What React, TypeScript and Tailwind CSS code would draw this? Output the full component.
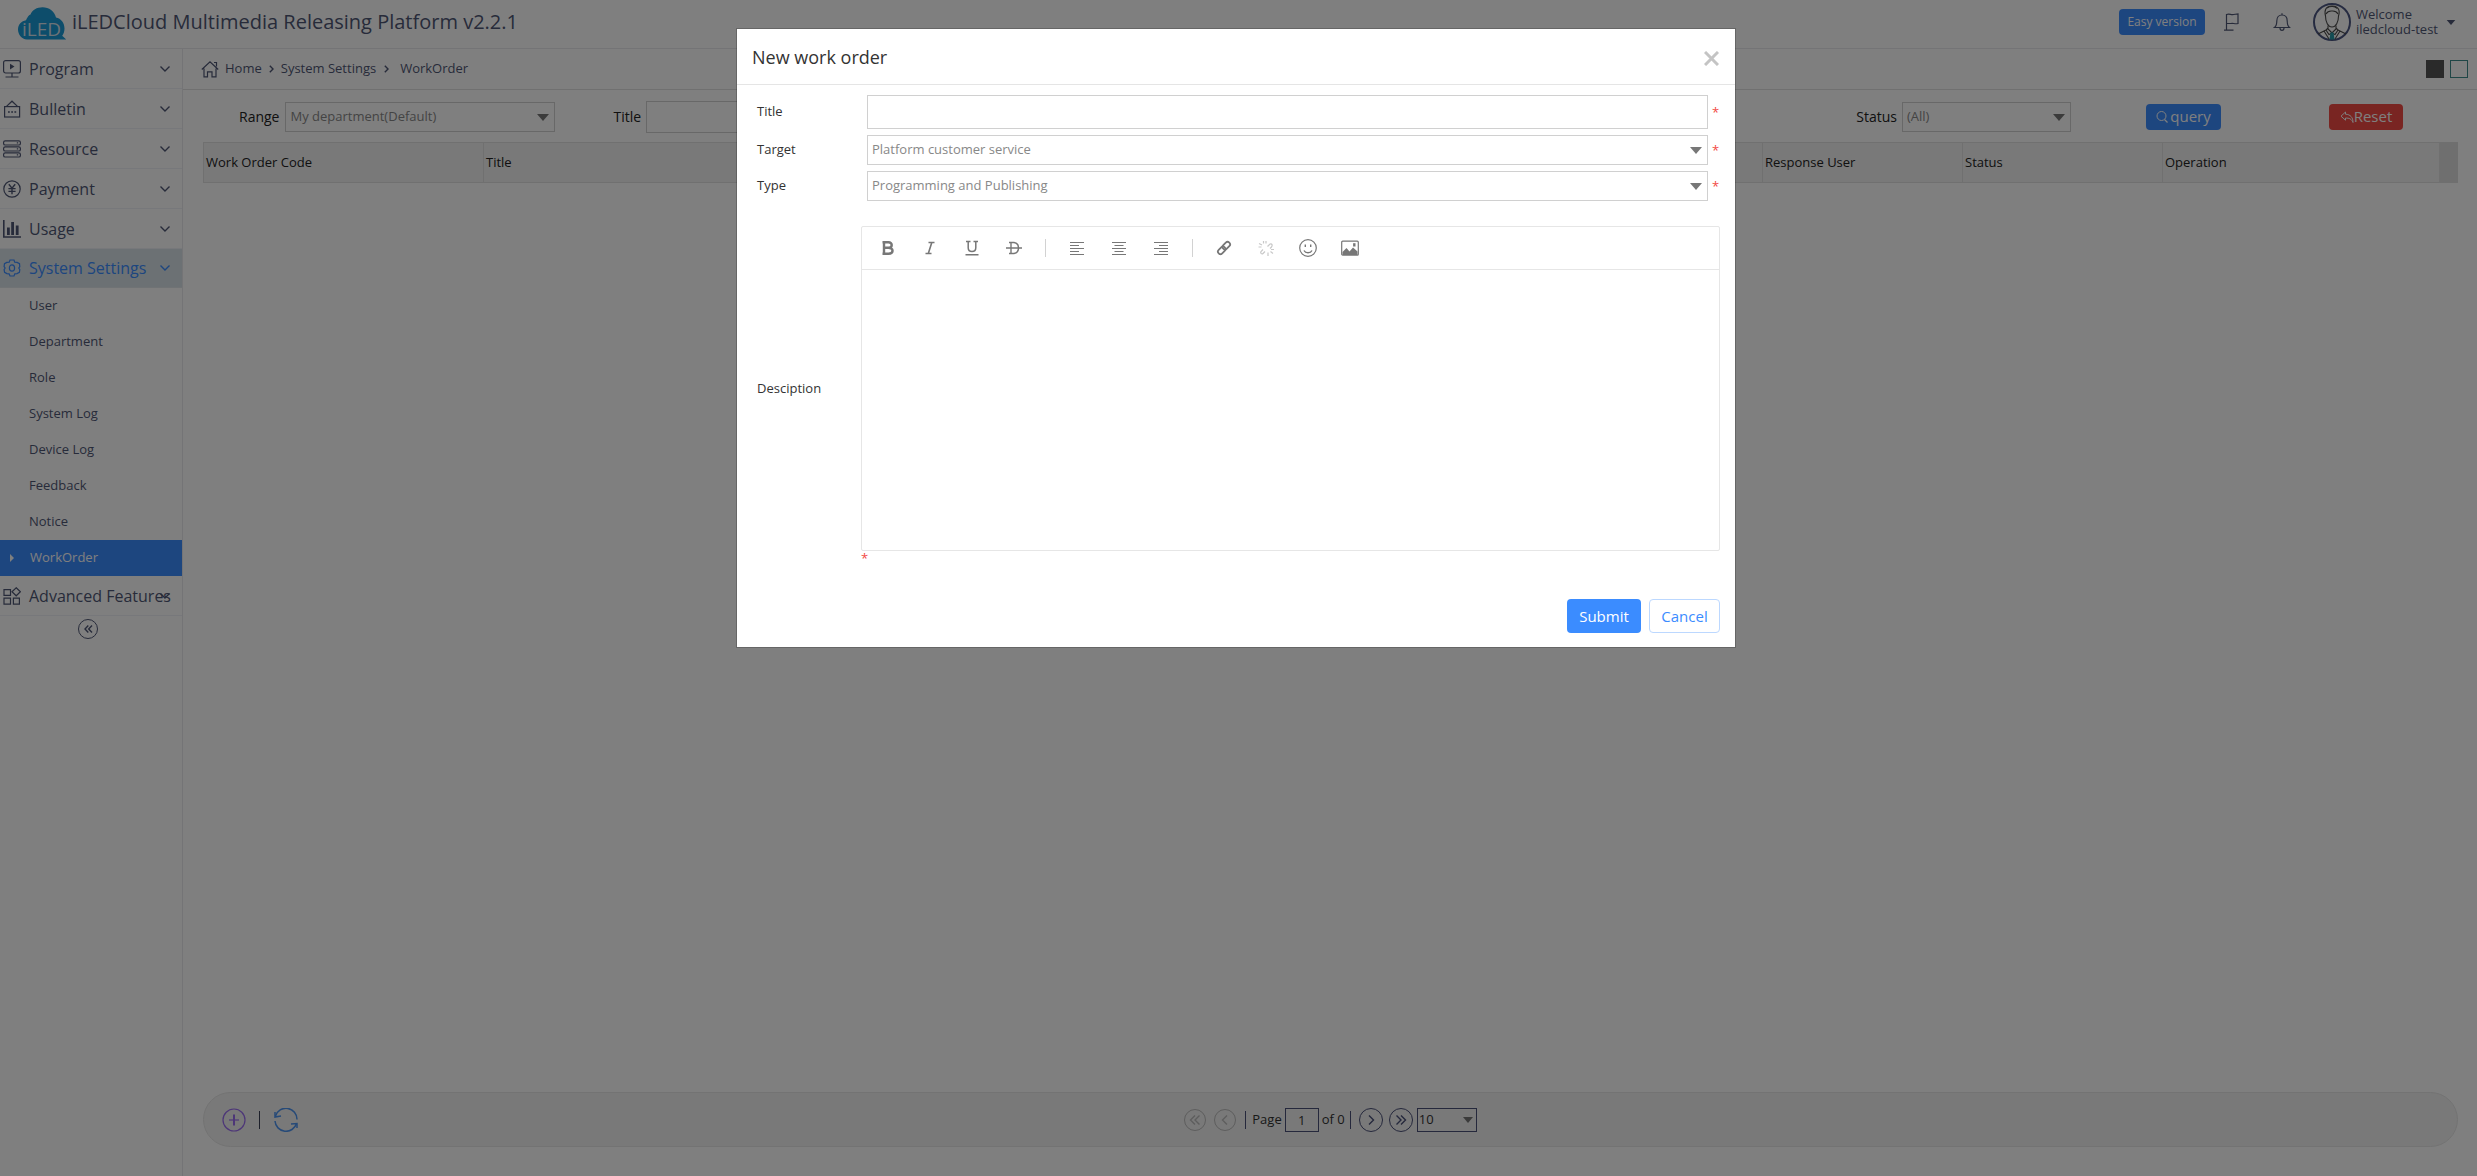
import React from "react";

type IconProps = { className?: string };

const Svg = ({ children, className, box = "0 0 18 18" }: { children: React.ReactNode; className?: string; box?: string }) => (
  <svg viewBox={box} fill="none" stroke="currentColor" strokeWidth="1.2" className={className ?? "h-[18px] w-[18px]"} aria-hidden="true">
    {children}
  </svg>
);

const ProgramIcon = () => (
  <Svg>
    <rect x="0.6" y="0.6" width="16.8" height="12.4" rx="2" />
    <path d="M7 3.8v5.6L11.5 6.6z" fill="currentColor" stroke="none" />
    <path d="M9 13v3.6M2.5 17h13" />
  </Svg>
);
const BulletinIcon = () => (
  <Svg>
    <rect x="1.6" y="6.6" width="15" height="10.4" />
    <path d="M3.5 6.4L9 1.2l5.5 5.2" />
    <path d="M5 12h1.8M8.2 12H10M11.4 12h1.8" strokeWidth="1.4" />
  </Svg>
);
const ResourceIcon = () => (
  <Svg>
    <rect x="0.6" y="0.8" width="16.8" height="4.2" rx="1.6" />
    <rect x="0.6" y="6.8" width="16.8" height="4.2" rx="1.6" />
    <rect x="0.6" y="12.8" width="16.8" height="4.2" rx="1.6" />
    <path d="M13.8 2.9h1.4M13.8 8.9h1.4M13.8 14.9h1.4" />
  </Svg>
);
const PaymentIcon = () => (
  <Svg>
    <circle cx="9" cy="9" r="8.2" />
    <path d="M5.8 4.2L9 8.2l3.2-4M9 8.2v6M5.4 8.6h7.2M5.4 11.4h7.2" strokeWidth="1.4" />
  </Svg>
);
const UsageIcon = () => (
  <Svg>
    <path d="M0.8 0v17H18" strokeWidth="1.6" />
    <path d="M5.4 7.5V15M9.6 2v13M14.2 5.5V15" strokeWidth="2.8" />
  </Svg>
);
const SettingsIcon = () => (
  <Svg>
    <path d="M7 1h4l.7 2.2 2.4.2 2.4 1.3.3 3-1 1.3 1 1.6-.4 2.8-2.4 1.2-2.2.2L11 17H7l-.9-2.2-2.2-.2-2.3-1.2-.5-2.8 1-1.6-1-1.5.4-2.8 2.3-1.3 2.4-.2z" />
    <ellipse cx="9" cy="9" rx="2.6" ry="3.2" />
  </Svg>
);
const AdvancedIcon = () => (
  <Svg>
    <path d="M1 2.6h6.500v5.800H1zM1 11.200h6.500v6H1zM10.400 11.200h6v6h-6z" />
    <path d="M13.200 .8l4.200 4-4.200 4-4.200-4z" />
  </Svg>
);

const Chevron = () => (
  <Svg box="0 0 10 6" className="h-[6px] w-[10px]">
    <path d="M0.5 0.5L5 5l4.5-4.5" strokeWidth="1.4" />
  </Svg>
);

const Caret = ({ className }: IconProps) => (
  <svg viewBox="0 0 12 7" className={className} aria-hidden="true">
    <path d="M0 0h12L6 7z" fill="currentColor" />
  </svg>
);

const Logo = () => (
  <svg viewBox="0 0 50 34" className="h-[34px] w-[50px]" role="img" aria-label="iLED">
    <path
      d="M10 32.5C4.5 32 1 27.5 1 22.5c0-5 3.500-8.500 8-9.200C11 9 12 8 13.500 7.500 15 3 20 .2 25.500.2c6.500 0 12 4 13.500 10.300 5 1 8.500 5.500 8.500 11 0 3-.8 5.200-2.300 7.200l4 3.800z"
      fill="#1a9ad6"
    />
    <text x="5" y="29" fill="#d9e4ee" fontFamily="Open Sans, sans-serif" fontSize="19">
      iLED
    </text>
  </svg>
);

const Avatar = () => (
  <svg viewBox="0 0 38 38" className="h-[38px] w-[38px]" role="img" aria-label="User avatar">
    <circle cx="19" cy="19" r="18" fill="none" stroke="#4c5782" strokeWidth="2" />
    <g fill="none" stroke="#4a4a4a" strokeWidth="1.1">
      <path d="M12.500 13C11 7 13 3 19 3s8.500 4 6.500 10c0 6-2.500 11-6.500 11s-6.500-5-6.500-11z" />
      <path d="M13 11c2-3.500 4-3 6-3s4-.5 6 3M14 5c3-2 8-2 10 .5" />
      <path d="M15 22.500v3.500l4 4 4-4v-3.500M15 25l-2 2 3 4.500 3-1.500 3 1.500 3-4.500-2-2M13 27l-8 4M25 27l8 4M11 28l5 8M27 28l-5 8" />
    </g>
    <path d="M17.500 29.500h3l1 7h-5z" fill="#279aa8" />
  </svg>
);

const menu = [
  { label: "Program", Icon: ProgramIcon },
  { label: "Bulletin", Icon: BulletinIcon },
  { label: "Resource", Icon: ResourceIcon },
  { label: "Payment", Icon: PaymentIcon },
  { label: "Usage", Icon: UsageIcon },
];
const subMenu = ["User", "Department", "Role", "System Log", "Device Log", "Feedback", "Notice"];

function MenuButton({ label, Icon, active }: { label: string; Icon: React.FC; active?: boolean }) {
  return (
    <button
      type="button"
      className={
        "relative flex w-full items-center border-b pl-[3px] text-left text-base " +
        (active ? "h-[39px] border-[#e0e6ea] bg-[#d8e2e8] font-medium text-[#3b8cff]" : "h-10 border-[#eef0f6] text-[#4f5775]")
      }
    >
      <Icon />
      <span className="ml-2 whitespace-nowrap">{label}</span>
      <span className="absolute right-3">
        <Chevron />
      </span>
    </button>
  );
}

function Sidebar() {
  return (
    <nav className="w-[183px] shrink-0 border-r border-[#e8e8ec] text-[#4f5775]">
      {menu.map((m) => (
        <MenuButton key={m.label} {...m} />
      ))}
      <MenuButton label="System Settings" Icon={SettingsIcon} active />
      <ul className="text-[13px]">
        {subMenu.map((s) => (
          <li key={s}>
            <a href="#" className="flex h-9 items-center pl-[29px]">
              {s}
            </a>
          </li>
        ))}
        <li>
          <a href="#" aria-current="page" className="flex h-9 items-center bg-[#3b8cff] pl-[10px] text-white">
            <svg viewBox="0 0 4 8" className="h-2 w-1" aria-hidden="true">
              <path d="M0 0l4 4-4 4z" fill="currentColor" />
            </svg>
            <span className="ml-4">WorkOrder</span>
          </a>
        </li>
      </ul>
      <MenuButton label="Advanced Features" Icon={AdvancedIcon} />
      <div className="flex justify-center pt-[3px] pr-1.5">
        <button type="button" aria-label="Collapse menu" className="flex h-5 w-5 items-center justify-center rounded-full border border-current">
          <Svg box="0 0 9 8" className="h-2 w-[9px]">
            <path d="M4.300.5L1 4l3.300 3.500M8 .5L4.700 4 8 7.500" strokeWidth="1.4" />
          </Svg>
        </button>
      </div>
    </nav>
  );
}

function Header() {
  return (
    <header className="flex h-[49px] items-center border-b border-[#e8e8ec] pr-[21px] pl-[17px] text-[#4f5775]">
      <Logo />
      <h1 className="mb-[5px] ml-[5px] text-xl">iLEDCloud Multimedia Releasing Platform v2.2.1</h1>
      <div className="mb-1 ml-auto flex items-center">
        <button type="button" className="h-[26px] w-[86px] rounded bg-[#3b8cff] text-xs text-white">
          Easy version
        </button>
        <button type="button" aria-label="Flag" className="ml-[18px]">
          <Svg>
            <path d="M3.500 17V1.500c3-1.200 4.500.8 7 0l4.500-.5v9.500c-3 .8-5-.6-7 0H3.500M1 17.200h9.500" />
          </Svg>
        </button>
        <button type="button" aria-label="Notifications" className="ml-8">
          <Svg>
            <path d="M1.500 14.500c2-1.500 2.300-3.500 2.300-6.500 0-3.500 2-6 5.200-6s5.200 2.500 5.200 6c0 3 .3 5 2.300 6.500zM9 .3V2M7 15c0 1.500.8 2.300 2 2.300s2-.8 2-2.300" />
          </Svg>
        </button>
        <span className="ml-[22px]">
          <Avatar />
        </span>
        <div className="ml-[5px] text-[13px] leading-[15px]">
          <div>Welcome</div>
          <div>iledcloud-test</div>
        </div>
        <button type="button" aria-label="Account menu" className="ml-2">
          <Caret className="h-[5px] w-[10px]" />
        </button>
      </div>
    </header>
  );
}

function Select({ id, value, options, className }: { id: string; value: string; options?: string[]; className: string }) {
  return (
    <div className={"relative " + className}>
      <select id={id} defaultValue={value} className="h-[30px] w-full appearance-none border border-[#d0d0d0] bg-white pl-[4px] text-[13px] text-[#888]">
        {(options ?? [value]).map((o) => (
          <option key={o}>{o}</option>
        ))}
      </select>
      <Caret className="pointer-events-none absolute top-3 right-[6px] h-[7px] w-3 text-[#777]" />
    </div>
  );
}

function Filters() {
  return (
    <form className="flex h-[52px] shrink-0 items-center pt-px pr-[74px] pl-14 text-sm text-[#222]" onSubmit={(e) => e.preventDefault()}>
      <label htmlFor="range">Range</label>
      <Select id="range" value="My department(Default)" className="ml-[6px] w-[270px]" />
      <label htmlFor="filter-title" className="ml-[58px]">
        Title
      </label>
      <input id="filter-title" type="text" className="ml-[5px] h-8 w-[270px] border border-[#d0d0d0]" />
      <label htmlFor="status" className="ml-auto">
        Status
      </label>
      <Select id="status" value="(All)" className="ml-[5px] w-[169px]" />
      <button type="submit" className="ml-[75px] flex h-[26px] w-[75px] items-center justify-center rounded bg-[#3b8cff] text-[15px] text-white">
        <Svg box="0 0 12 14" className="mr-[2px] h-[14px] w-3">
          <circle cx="5.500" cy="6" r="4.500" strokeWidth="1" />
          <path d="M8.500 9.500l3 3" />
        </Svg>
        query
      </button>
      <button type="reset" className="ml-[108px] flex h-[26px] w-[74px] items-center justify-center rounded bg-[#f24a44] text-[15px] text-white">
        <Svg box="0 0 14 12" className="h-3 w-[14px]">
          <path d="M5.500 1L1 5.200l4.500 4V7c4 0 6 1 7.500 4.500C13 6.500 10.500 3.400 5.500 3.200z" strokeWidth="1" />
        </Svg>
        Reset
      </button>
    </form>
  );
}

const Circle = ({ label, muted, d }: { label: string; muted?: boolean; d: string }) => (
  <button
    type="button"
    aria-label={label}
    disabled={muted}
    className={
      "flex items-center justify-center rounded-full border " +
      (muted ? "h-[22px] w-[22px] border-[#bbb] text-[#bbb]" : "h-6 w-6 border-[#4a5078] text-[#4a5078]")
    }
  >
    <Svg box="0 0 12 10" className="h-[10px] w-3">
      <path d={d} strokeWidth="1.400" />
    </Svg>
  </button>
);

function TableFooter() {
  return (
    <footer className="mr-[19px] mb-[29px] ml-5 grid h-[55px] grid-cols-[1fr_auto_1fr] items-center rounded-full border border-[#e6e6e6] bg-[#f2f2f2]">
      <div className="flex items-center pl-[18px]">
        <button type="button" aria-label="Add" className="text-[#9a6cf0]">
          <Svg box="0 0 24 24" className="h-6 w-6">
            <circle cx="12" cy="12" r="11" />
            <path d="M7 12h10" strokeWidth="1.200" />
            <path d="M12 6.500v11" strokeWidth="2" />
          </Svg>
        </button>
        <span className="ml-[13px] h-[18px] w-px bg-[#3a4055]" />
        <button type="button" aria-label="Refresh" className="ml-[14px] text-[#4d94f0]">
          <Svg box="0 0 24 24" className="h-6 w-6">
            <path d="M1.500 8A11 11 0 0 1 23 11.500M22.500 15.500A11 11 0 0 1 1 13" strokeWidth="1.500" />
            <path d="M1 4v5l6-1M23 20v-4.500l-6 .5" strokeWidth="1.500" />
          </Svg>
        </button>
      </div>
      <div className="flex items-center text-[13px] text-[#333]">
        <Circle label="First page" muted d="M6 .5L1.500 5 6 9.500M10.500 .5L6 5l4.500 4.500" />
        <span className="w-2" />
        <Circle label="Previous page" muted d="M8 .5L3.500 5 8 9.500" />
        <span className="mr-[6px] ml-[9px] h-[18px] w-px bg-[#4a5078]" />
        <label htmlFor="page">Page</label>
        <input id="page" type="text" defaultValue="1" className="mr-[3px] ml-[3px] h-6 w-[34px] border border-[#4a5078] text-center" />
        <span>of 0</span>
        <span className="mr-2 ml-[5px] h-[18px] w-px bg-[#4a5078]" />
        <Circle label="Next page" d="M4 .5L8.500 5 4 9.500" />
        <span className="w-1.5" />
        <Circle label="Last page" d="M1.500 .5L6 5 1.500 9.500M6 .5L10.500 5 6 9.500" />
        <div className="relative ml-1 w-[60px]">
          <select aria-label="Rows per page" defaultValue="10" className="block h-6 w-full appearance-none border border-[#4a5078] pl-px">
            <option>10</option>
            <option>20</option>
          </select>
          <Caret className="pointer-events-none absolute top-[9px] right-1 h-[6px] w-[10px] text-[#777]" />
        </div>
      </div>
    </footer>
  );
}

function Content() {
  return (
    <main className="flex min-w-0 flex-1 flex-col">
      <div className="flex h-[41px] shrink-0 items-center border-b border-[#e0e0e0] pr-[9px] pl-[18px] text-[13px] text-[#4f5775]">
        <Svg>
          <path d="M.8 9.500L9 1.800l8.200 7.700M3 8.500v8.400h3.500v-5h4.500v5h4V8.500M13 2.500h2.500v4" />
        </Svg>
        <nav aria-label="Breadcrumb" className="ml-[6px] flex items-center">
          <a href="#">Home</a>
          <Svg box="0 0 5 8" className="mx-[7px] h-2 w-[5px]">
            <path d="M.8.8L4 4 .8 7.200" strokeWidth="1.400" />
          </Svg>
          <a href="#">System Settings</a>
          <Svg box="0 0 5 8" className="mr-[11px] ml-2 h-2 w-[5px]">
            <path d="M.8.8L4 4 .8 7.200" strokeWidth="1.400" />
          </Svg>
          <span>WorkOrder</span>
        </nav>
        <button type="button" aria-label="Dark theme" className="ml-auto h-[18px] w-[18px] bg-[#555]" />
        <button type="button" aria-label="Light theme" className="ml-[6px] h-[18px] w-[18px] border border-[#3e8d8d]" />
      </div>
      <Filters />
      <div className="mr-[19px] ml-5 flex flex-1 items-start">
        <table className="h-[41px] flex-1 table-fixed border-collapse border border-[#e0e0e0] bg-[#f2f2f2] text-left text-[13px] text-[#222]">
          <thead>
            <tr>
              <th className="w-[280px] border border-[#e0e0e0] pl-[2px] font-medium">Work Order Code</th>
              <th className="border border-[#e0e0e0] pl-[2px] font-medium">Title</th>
              <th className="w-[200px] border border-[#e0e0e0] pl-[2px] font-medium">Response User</th>
              <th className="w-[200px] border border-[#e0e0e0] pl-[2px] font-medium">Status</th>
              <th className="w-[277px] border border-[#e0e0e0] pl-[2px] font-medium">Operation</th>
            </tr>
          </thead>
        </table>
        <div className="h-[41px] w-[18px] bg-[#dedede]" />
      </div>
      <TableFooter />
    </main>
  );
}

const Sep = () => <span className="mx-[5px] h-[18px] w-px bg-[#d2d2d2]" />;

const tool = "flex h-[30px] w-8 items-center justify-center text-[#777]";
const lines = {
  "Align left": "M1 1.500h14M1 4.500h9M1 7.500h14M1 10.500h9M1 13.500h14",
  "Align center": "M1 1.500h14M3.500 4.500h9M1 7.500h14M3.500 10.500h9M1 13.500h14",
  "Align right": "M1 1.500h14M6 4.500h9M1 7.500h14M6 10.500h9M1 13.500h14",
};

function Toolbar() {
  return (
    <div className="flex h-[43px] items-center gap-[10px] border-b border-[#e6e6e6] pl-[10px]">
      <button type="button" aria-label="Bold" className={tool}>
        <Svg box="0 0 14 14" className="h-[14px] w-[14px]">
          <path d="M3 1.500v11M1.500 1.300h6c4.300 0 4.300 5.400 0 5.400h-4.500M7.500 6.800c5.400 0 5.400 5.900 0 5.900h-6" strokeWidth="2.400" />
        </Svg>
      </button>
      <button type="button" aria-label="Italic" className={tool}>
        <Svg box="0 0 14 14" className="h-[14px] w-[14px]">
          <path d="M5.500 1.500h6M2.500 12.500h6M8.800 1.500l-3.500 11" strokeWidth="1.600" />
        </Svg>
      </button>
      <button type="button" aria-label="Underline" className={tool}>
        <Svg box="0 0 14 16" className="h-4 w-[14px]">
          <path d="M1 1.500h4.500M8.500 1.500H13M3.200 1.500v6.300c0 5 7.600 5 7.600 0V1.500M.5 14.800h13" strokeWidth="1.500" />
        </Svg>
      </button>
      <button type="button" aria-label="Strikethrough" className={tool}>
        <Svg box="0 0 16 14" className="h-[14px] w-4">
          <path d="M3 1.500h5c6 1 6 10 0 11H3M5 1.500v11M0 7h16" strokeWidth="1.400" />
        </Svg>
      </button>
      <Sep />
      {Object.entries(lines).map(([label, d]) => (
        <button key={label} type="button" aria-label={label} className={tool}>
          <Svg box="0 0 16 15" className="h-[15px] w-4">
            <path d={d} strokeWidth="1.200" />
          </Svg>
        </button>
      ))}
      <Sep />
      <button type="button" aria-label="Insert link" className={tool}>
        <Svg box="0 0 16 16" className="h-4 w-4">
          <g transform="rotate(-45 8 8)" strokeWidth="1.800">
            <rect x="0.500" y="5.500" width="8.500" height="5" rx="2.500" />
            <rect x="7" y="5.500" width="8.500" height="5" rx="2.500" />
          </g>
        </Svg>
      </button>
      <button type="button" aria-label="Remove link" disabled className="flex h-[30px] w-8 items-center justify-center text-[#c9c9c9]">
        <Svg box="0 0 16 16" className="h-4 w-4">
          <path d="M5 9.500l-2 2c-1 2 1 3 2 2l2-2M9.500 6.500l2.500-2.500c2.500-.5 2.500 1.500 1.500 3L12 8.500M5.500 1v2.500M1 3.500l3 1.500M.5 7h3M10 12.500V16M12.500 11.500l2.500 2M13 9.500h3M8 1v2.500" />
        </Svg>
      </button>
      <button type="button" aria-label="Insert emoji" className={tool}>
        <Svg className="h-[18px] w-[18px]">
          <circle cx="9" cy="9" r="8.300" />
          <path d="M6.300 5.500v2.500M11.700 5.500v2.500M5 11.500c1.500 3 6.500 3 8 0" strokeWidth="1.400" />
        </Svg>
      </button>
      <button type="button" aria-label="Insert image" className={tool}>
        <Svg box="0 0 18 16" className="h-4 w-[18px]">
          <rect x="0.700" y="1.200" width="16.600" height="14" rx="1" />
          <path d="M1.500 15v-3l4-4 3 3.500L12 7.500l4.500 4V15z" fill="currentColor" stroke="none" />
          <path d="M13.300 3.200v3.300" strokeWidth="2.400" />
        </Svg>
      </button>
    </div>
  );
}

const Star = () => <span className="w-2 text-[13px] leading-[15px] text-[#f24a44]">*</span>;

function Dialog() {
  return (
    <div className="fixed inset-0 bg-black/50 pt-7 pr-[5px]">
      <section role="dialog" aria-modal="true" aria-labelledby="dialog-title" className="mx-auto w-[1000px] border border-black/20 bg-white bg-clip-padding text-[#333]">
        <header className="flex h-14 items-center justify-between border-b border-[#e5e5e5] pr-4 pl-[15px]">
          <h2 id="dialog-title" className="text-lg">
            New work order
          </h2>
          <button type="button" aria-label="Close" className="mt-1 text-[#c4c4c4]">
            <Svg box="0 0 15 15" className="h-[15px] w-[15px]">
              <path d="M1 1l13 13M14 1L1 14" strokeWidth="3" />
            </Svg>
          </button>
        </header>
        <form className="pt-[10px] pr-[15px] pb-[14px] text-[13px]" onSubmit={(e) => e.preventDefault()}>
          <div className="flex flex-col gap-[6px] pl-5">
            <div className="flex items-center">
              <label htmlFor="title" className="w-[110px]">
                Title
              </label>
              <input id="title" type="text" className="mr-1 h-[34px] flex-1 border border-[#d0d0d0] px-2" />
              <Star />
            </div>
            <div className="flex items-center">
              <label htmlFor="target" className="w-[110px]">
                Target
              </label>
              <Select id="target" value="Platform customer service" className="mr-1 flex-1" />
              <Star />
            </div>
            <div className="flex items-center">
              <label htmlFor="type" className="w-[110px]">
                Type
              </label>
              <Select id="type" value="Programming and Publishing" className="mr-1 flex-1" />
              <Star />
            </div>
          </div>
          <div className="mt-[25px] flex items-center pl-5">
            <label htmlFor="description" className="w-[104px]">
              Desciption
            </label>
            <div className="flex-1 rounded-xs border border-[#e6e6e6]">
              <Toolbar />
              <textarea id="description" className="block h-[280px] w-full resize-none p-2 outline-none" />
            </div>
          </div>
          <div className="flex pl-[124px]">
            <Star />
          </div>
          <div className="mt-[33px] flex justify-end gap-2 text-[15px]">
            <button type="submit" className="h-[34px] w-[74px] rounded bg-[#3b8cff] text-white">
              Submit
            </button>
            <button type="button" className="h-[34px] w-[71px] rounded border border-[#bcd8ff] text-[#3b8cff]">
              Cancel
            </button>
          </div>
        </form>
      </section>
    </div>
  );
}

export default function App() {
  return (
    <div className="flex min-h-screen flex-col bg-white font-['Open_Sans',sans-serif]">
      <Header />
      <div className="flex flex-1">
        <Sidebar />
        <Content />
      </div>
      <Dialog />
    </div>
  );
}
